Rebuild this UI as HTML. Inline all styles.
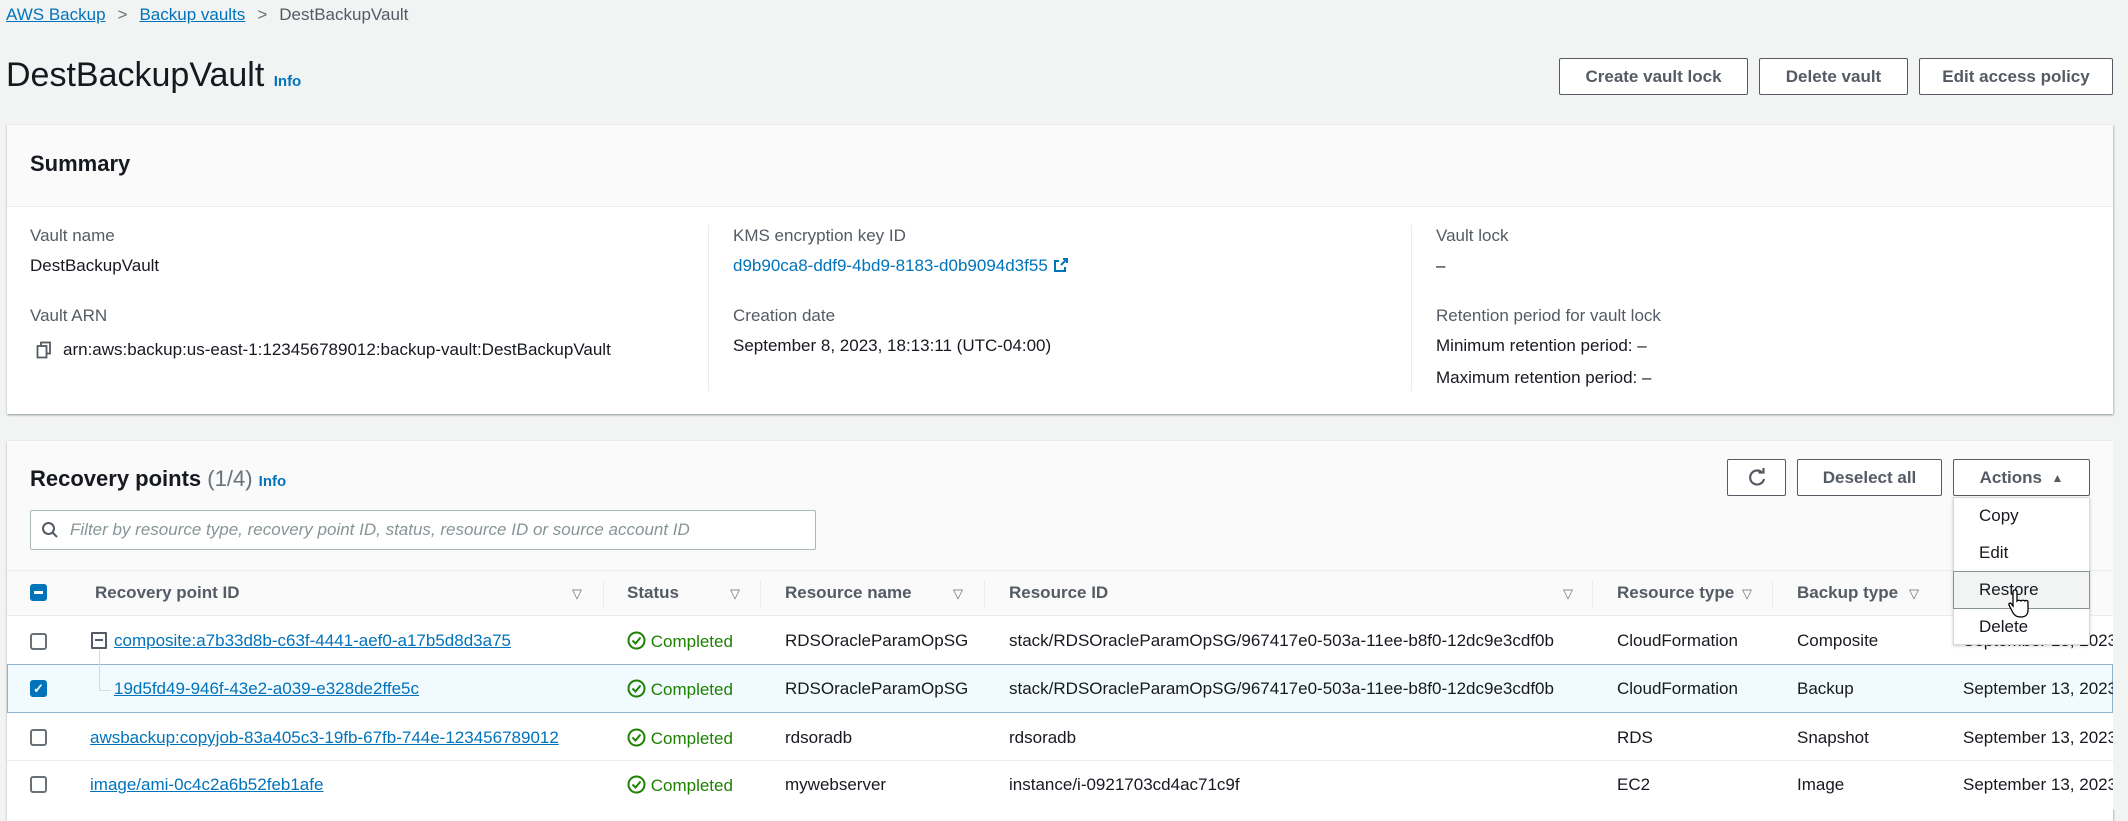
<!DOCTYPE html>
<html><head><meta charset="utf-8"><style>
*{box-sizing:border-box;margin:0;padding:0}
body{width:2128px;height:810px;overflow:hidden;background:#f2f3f3;font-family:"Liberation Sans",sans-serif;color:#16191f;font-size:17px;position:relative}
.a{position:absolute;white-space:nowrap}
.link{color:#0073bb}
.u{text-decoration:underline}
.lbl{color:#545b64}
.btn{position:absolute;background:#fff;border:1px solid #545b64;border-radius:2px;font-weight:bold;color:#545b64;font-size:17px;display:flex;align-items:center;justify-content:center}
.box{position:absolute;background:#fff;box-shadow:0 1px 2px rgba(0,28,36,.3),1px 1px 2px rgba(0,28,36,.15)}
.cb{position:absolute;width:17px;height:17px;border:2px solid #687078;border-radius:3px;background:#fff}
.ok{color:#1d8102}
.hd{color:#545b64;font-weight:bold}
.sort{position:absolute;color:#687078;font-size:13px}
.vd{position:absolute;width:1px;background:#eaeded}
</style></head><body>
<div class="a" style="left:6px;top:5px;font-size:17px"><span class="link u">AWS Backup</span><span style="color:#687078;margin:0 12px">&gt;</span><span class="link u">Backup vaults</span><span style="color:#687078;margin:0 12px">&gt;</span><span style="color:#545b64">DestBackupVault</span></div>
<div class="a" style="left:6px;top:56px;font-size:34px">DestBackupVault <span class="link" style="font-size:15px;font-weight:bold">Info</span></div>
<div class="btn" style="left:1559px;top:58px;width:189px;height:37px">Create vault lock</div>
<div class="btn" style="left:1759px;top:58px;width:149px;height:37px">Delete vault</div>
<div class="btn" style="left:1919px;top:58px;width:194px;height:37px">Edit access policy</div>

<div class="box" style="left:7px;top:125px;width:2106px;height:289px">
 <div style="position:absolute;left:0;top:0;right:0;height:82px;background:#fafafa;border-bottom:1px solid #eaeded"></div>
 <div class="a" style="left:23px;top:26px;font-size:22px;font-weight:bold">Summary</div>
 <div class="vd" style="left:701px;top:100px;height:166px"></div>
 <div class="vd" style="left:1404px;top:100px;height:166px"></div>
 <div class="a lbl" style="left:23px;top:101px">Vault name</div>
 <div class="a" style="left:23px;top:131px">DestBackupVault</div>
 <div class="a lbl" style="left:23px;top:181px">Vault ARN</div>
 <svg class="a" style="left:29px;top:216px" width="16" height="18" viewBox="0 0 16 18"><rect x="5" y="1.5" width="9" height="11" fill="#fff" stroke="#545b64" stroke-width="1.8"/><rect x="1.5" y="5" width="9" height="11.5" fill="#fff" stroke="#545b64" stroke-width="1.8"/></svg>
 <div class="a" style="left:56px;top:215px">arn:aws:backup:us-east-1:123456789012:backup-vault:DestBackupVault</div>
 <div class="a lbl" style="left:726px;top:101px">KMS encryption key ID</div>
 <div class="a link" style="left:726px;top:131px">d9b90ca8-ddf9-4bd9-8183-d0b9094d3f55 <svg width="16" height="16" viewBox="0 0 16 16" style="vertical-align:-2px"><path d="M10 2h4v4M14 2L8 8M12 10v4H2V4h4" fill="none" stroke="#0073bb" stroke-width="2"/></svg></div>
 <div class="a lbl" style="left:726px;top:181px">Creation date</div>
 <div class="a" style="left:726px;top:211px">September 8, 2023, 18:13:11 (UTC-04:00)</div>
 <div class="a lbl" style="left:1429px;top:101px">Vault lock</div>
 <div class="a" style="left:1429px;top:131px">–</div>
 <div class="a lbl" style="left:1429px;top:181px">Retention period for vault lock</div>
 <div class="a" style="left:1429px;top:211px">Minimum retention period: –</div>
 <div class="a" style="left:1429px;top:243px">Maximum retention period: –</div>
</div>

<div class="box" style="left:7px;top:441px;width:2106px;height:380px;background:#fff">
 <div style="position:absolute;left:0;top:0;right:0;height:129px;background:#fafafa"></div>
 <div class="a" style="left:23px;top:25px;font-size:22px"><b>Recovery points</b> <span style="color:#687078">(1/4)</span> <span class="link" style="font-size:15px;font-weight:bold">Info</span></div>
 <div style="position:absolute;left:23px;top:69px;width:786px;height:40px;border:1px solid #aab7b8;border-radius:2px;background:#fff"></div>
 <svg class="a" style="left:34px;top:80px" width="18" height="18" viewBox="0 0 18 18"><circle cx="7.5" cy="7.5" r="5.5" fill="none" stroke="#545b64" stroke-width="2"/><path d="M11.5 11.5L16 16" stroke="#545b64" stroke-width="2"/></svg>
 <div class="a" style="left:63px;top:79px;color:#879596;font-style:italic">Filter by resource type, recovery point ID, status, resource ID or source account ID</div>
 <div style="position:absolute;left:0;top:129px;right:0;height:46px;background:#fafafa;border-top:1px solid #eaeded;border-bottom:1px solid #eaeded"></div>
</div>
<div class="btn" style="left:1727px;top:459px;width:59px;height:37px"><svg width="22" height="22" viewBox="0 0 22 22"><path d="M16.5 6A7 7 0 1 0 18 12" fill="none" stroke="#545b64" stroke-width="2.2"/><path d="M12.5 5.5h5V1" fill="none" stroke="#545b64" stroke-width="2.2"/></svg></div>
<div class="btn" style="left:1797px;top:459px;width:145px;height:37px">Deselect all</div>
<div class="btn" style="left:1953px;top:459px;width:137px;height:37px">Actions&nbsp;&nbsp;<span style="font-size:12px">▲</span></div>

<div class="a" style="left:30px;top:584px;width:17px;height:17px;background:#0073bb;border-radius:3px"><div style="position:absolute;left:4px;top:7px;width:9px;height:3px;background:#fff"></div></div>
<div class="a hd" style="left:95px;top:583px">Recovery point ID</div><div class="sort" style="left:572px;top:586px">▽</div>
<div class="vd" style="left:603px;top:580px;height:28px"></div>
<div class="a hd" style="left:627px;top:583px">Status</div><div class="sort" style="left:730px;top:586px">▽</div>
<div class="vd" style="left:760px;top:580px;height:28px"></div>
<div class="a hd" style="left:785px;top:583px">Resource name</div><div class="sort" style="left:953px;top:586px">▽</div>
<div class="vd" style="left:984px;top:580px;height:28px"></div>
<div class="a hd" style="left:1009px;top:583px">Resource ID</div><div class="sort" style="left:1563px;top:586px">▽</div>
<div class="vd" style="left:1592px;top:580px;height:28px"></div>
<div class="a hd" style="left:1617px;top:583px">Resource type</div><div class="sort" style="left:1742px;top:586px">▽</div>
<div class="vd" style="left:1772px;top:580px;height:28px"></div>
<div class="a hd" style="left:1797px;top:583px">Backup type</div><div class="sort" style="left:1909px;top:586px">▽</div>

<div style="position:absolute;left:7px;top:664px;width:2106px;height:49px;background:#f1faff;border:1px solid #8fb3cc"></div>
<div style="position:absolute;left:7px;top:760px;width:2106px;height:1px;background:#eaeded"></div>

<div class="cb" style="left:30px;top:633px"></div>
<div class="a" style="left:91px;top:632px;width:16px;height:17px;border:2px solid #545b64;border-radius:1px"><div style="position:absolute;left:2px;top:5px;width:8px;height:2px;background:#545b64"></div></div>
<div style="position:absolute;left:99px;top:650px;width:1px;height:40px;background:#d5dbdb"></div>
<div style="position:absolute;left:99px;top:690px;width:12px;height:1px;background:#d5dbdb"></div>
<div class="a link u" style="left:114px;top:631px">composite:a7b33d8b-c63f-4441-aef0-a17b5d8d3a75</div>

<div class="a" style="left:30px;top:680px;width:17px;height:17px;background:#0073bb;border-radius:3px;color:#fff;font-size:13px;text-align:center;line-height:17px;font-weight:bold">✓</div>
<div class="a link u" style="left:114px;top:679px">19d5fd49-946f-43e2-a039-e328de2ffe5c</div>

<div class="cb" style="left:30px;top:729px"></div>
<div class="a link u" style="left:90px;top:728px">awsbackup:copyjob-83a405c3-19fb-67fb-744e-123456789012</div>
<div class="cb" style="left:30px;top:776px"></div>
<div class="a link u" style="left:90px;top:775px">image/ami-0c4c2a6b52feb1afe</div>

<div class="a ok" style="left:627px;top:631px"><svg width="19" height="19" viewBox="0 0 19 19" style="vertical-align:-3px"><circle cx="9.5" cy="9.5" r="8" fill="none" stroke="#1d8102" stroke-width="2"/><path d="M5.5 9.5l3 3 5-6" fill="none" stroke="#1d8102" stroke-width="2"/></svg> Completed</div>
<div class="a ok" style="left:627px;top:679px"><svg width="19" height="19" viewBox="0 0 19 19" style="vertical-align:-3px"><circle cx="9.5" cy="9.5" r="8" fill="none" stroke="#1d8102" stroke-width="2"/><path d="M5.5 9.5l3 3 5-6" fill="none" stroke="#1d8102" stroke-width="2"/></svg> Completed</div>
<div class="a ok" style="left:627px;top:728px"><svg width="19" height="19" viewBox="0 0 19 19" style="vertical-align:-3px"><circle cx="9.5" cy="9.5" r="8" fill="none" stroke="#1d8102" stroke-width="2"/><path d="M5.5 9.5l3 3 5-6" fill="none" stroke="#1d8102" stroke-width="2"/></svg> Completed</div>
<div class="a ok" style="left:627px;top:775px"><svg width="19" height="19" viewBox="0 0 19 19" style="vertical-align:-3px"><circle cx="9.5" cy="9.5" r="8" fill="none" stroke="#1d8102" stroke-width="2"/><path d="M5.5 9.5l3 3 5-6" fill="none" stroke="#1d8102" stroke-width="2"/></svg> Completed</div>

<div class="a" style="left:785px;top:631px">RDSOracleParamOpSG</div>
<div class="a" style="left:785px;top:679px">RDSOracleParamOpSG</div>
<div class="a" style="left:785px;top:728px">rdsoradb</div>
<div class="a" style="left:785px;top:775px">mywebserver</div>

<div class="a" style="left:1009px;top:631px">stack/RDSOracleParamOpSG/967417e0-503a-11ee-b8f0-12dc9e3cdf0b</div>
<div class="a" style="left:1009px;top:679px">stack/RDSOracleParamOpSG/967417e0-503a-11ee-b8f0-12dc9e3cdf0b</div>
<div class="a" style="left:1009px;top:728px">rdsoradb</div>
<div class="a" style="left:1009px;top:775px">instance/i-0921703cd4ac71c9f</div>

<div class="a" style="left:1617px;top:631px">CloudFormation</div>
<div class="a" style="left:1617px;top:679px">CloudFormation</div>
<div class="a" style="left:1617px;top:728px">RDS</div>
<div class="a" style="left:1617px;top:775px">EC2</div>

<div class="a" style="left:1797px;top:631px">Composite</div>
<div class="a" style="left:1797px;top:679px">Backup</div>
<div class="a" style="left:1797px;top:728px">Snapshot</div>
<div class="a" style="left:1797px;top:775px">Image</div>

<div class="a" style="left:1963px;top:631px">September 13, 2023</div>
<div class="a" style="left:1963px;top:679px">September 13, 2023</div>
<div class="a" style="left:1963px;top:728px">September 13, 2023</div>
<div class="a" style="left:1963px;top:775px">September 13, 2023</div>
<div style="position:absolute;left:2113px;top:441px;width:15px;height:369px;background:#f2f3f3"></div>

<div style="position:absolute;left:1953px;top:497px;width:137px;height:148px;background:#fff;border:1px solid #d5dbdb;box-shadow:0 1px 3px rgba(0,0,0,.2)">
 <div class="a" style="left:25px;top:8px">Copy</div>
 <div class="a" style="left:25px;top:45px">Edit</div>
 <div style="position:absolute;left:-1px;top:73px;width:137px;height:38px;background:#f2f3f3;border:1px solid #879596"></div>
 <div class="a" style="left:25px;top:82px">Restore</div>
 <div class="a" style="left:25px;top:119px">Delete</div>
</div>
<svg class="a" style="left:2008px;top:588px" width="24" height="32" viewBox="0 0 24 32"><path d="M7 2c1.5 0 2 1 2 2v9c1-1 3-1 4 0 1-1 3-1 4 0 1-1 3-.5 3 1v8c0 4-2 7-7 7s-7-2-9-6l-3-6c-.5-1.5 1-2.5 2-1.5L5 18V4c0-1 .5-2 2-2z" fill="#fff" stroke="#000" stroke-width="1.3"/></svg>
</body></html>
